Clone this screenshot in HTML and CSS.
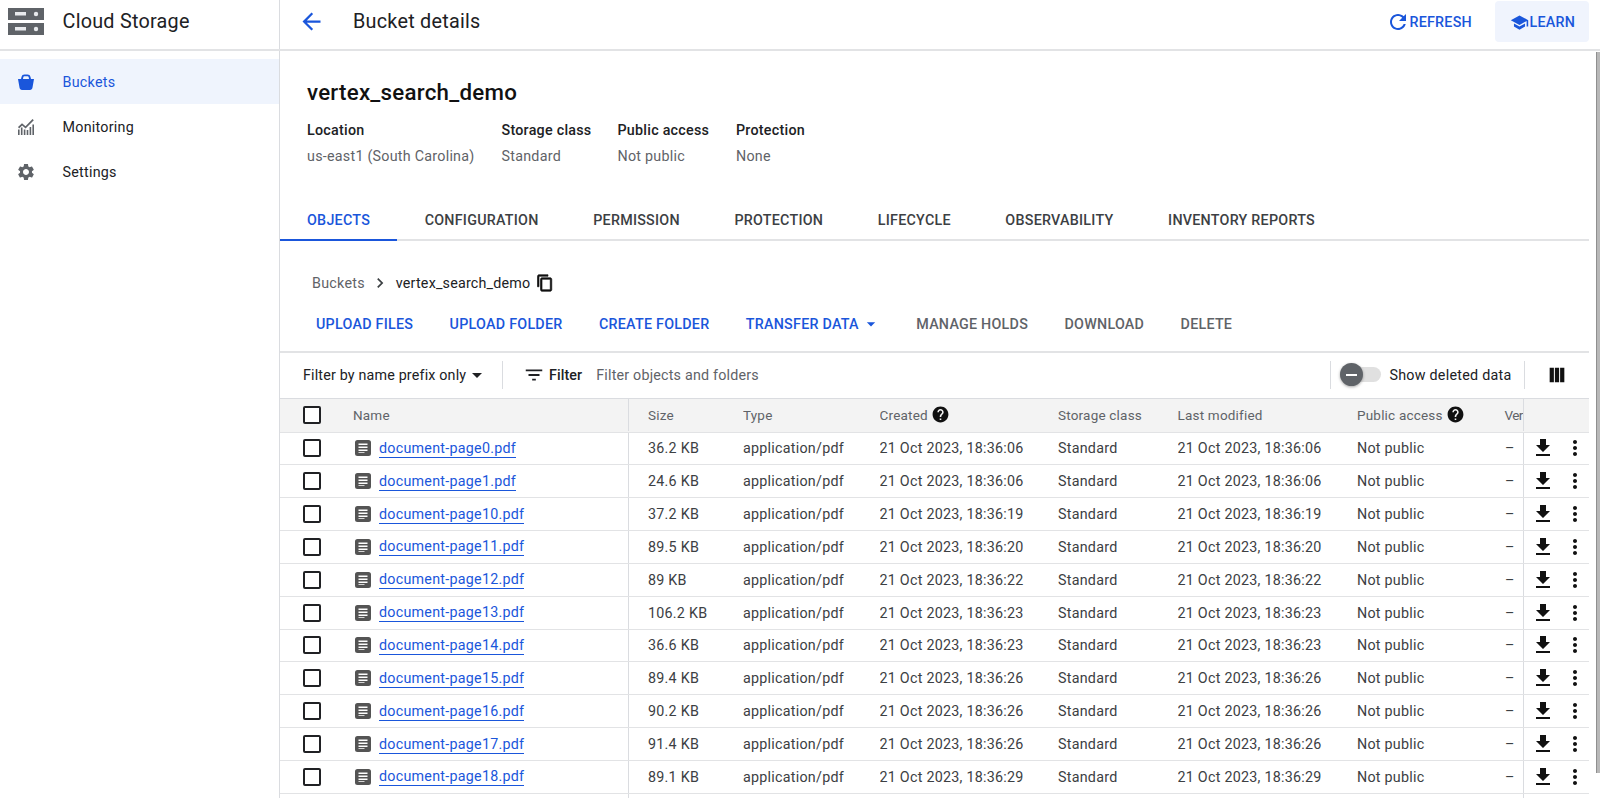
FILE: index.html
```html
<!DOCTYPE html>
<html lang="en">
<head>
<meta charset="utf-8">
<title>Bucket details - Cloud Storage</title>
<link rel="stylesheet" href="styles.css">
</head>
<body>
<svg class="defs" aria-hidden="true">
  <symbol id="i-dl" viewBox="0 0 24 24"><path d="M19 9h-4V3H9v6H5l7 7 7-7zM5 18v2h14v-2H5z"/></symbol>
  <symbol id="i-more" viewBox="0 0 24 24"><path d="M12 8c1.1 0 2-.9 2-2s-.9-2-2-2-2 .9-2 2 .9 2 2 2zm0 2c-1.1 0-2 .9-2 2s.9 2 2 2 2-.9 2-2-.9-2-2-2zm0 6c-1.1 0-2 .9-2 2s.9 2 2 2 2-.9 2-2-.9-2-2-2z"/></symbol>
  <symbol id="i-help" viewBox="0 0 24 24"><path d="M12 2C6.48 2 2 6.48 2 12s4.48 10 10 10 10-4.48 10-10S17.52 2 12 2zm1 17h-2v-2h2v2zm2.07-7.75l-.9.92C13.45 12.9 13 13.5 13 15h-2v-.5c0-1.1.45-2.1 1.17-2.83l1.24-1.26c.37-.36.59-.86.59-1.41 0-1.1-.9-2-2-2s-2 .9-2 2H8c0-2.21 1.79-4 4-4s4 1.79 4 4c0 .88-.36 1.68-.93 2.25z"/></symbol>
  <symbol id="i-doc" viewBox="0 0 16 16"><path fill-rule="evenodd" d="M2.5 0h11A2.5 2.5 0 0 1 16 2.500v11a2.500 2.500 0 0 1-2.500 2.500h-11A2.500 2.500 0 0 1 0 13.500v-11A2.500 2.500 0 0 1 2.500 0zM3.500 3.500v1.500h9V3.500zM3.500 6.500V8h9V6.500zM3.500 9.500V11h9V9.500zM3.500 12v.800h6V12z"/></symbol>
</svg>
<div class="app">
  <header class="topbar">
    <div class="brand">
      <svg class="logo" viewBox="0 0 36 27"><path fill="#5f6368" d="M0 0h36v12H0zM0 15h36v12H0z"/><path fill="#e8eaed" d="M7 4h11v3.500H7zM7 19h11v3.500H7z"/><circle cx="28" cy="6" r="2.200" fill="#e8eaed"/><circle cx="28" cy="21" r="2.200" fill="#e8eaed"/></svg>
      <span class="brand-name">Cloud Storage</span>
    </div>
    <div class="pagehead">
      <svg class="back" viewBox="0 0 24 24"><path d="M20 11H7.830l5.590-5.590L12 4l-8 8 8 8 1.410-1.410L7.830 13H20v-2z"/></svg>
      <h1 class="page-title">Bucket details</h1>
      <a class="head-btn refresh"><svg viewBox="0 0 24 24"><path d="M17.650 6.350C16.200 4.900 14.210 4 12 4c-4.420 0-7.990 3.580-7.990 8s3.570 8 7.990 8c3.730 0 6.840-2.550 7.730-6h-2.080c-.82 2.330-3.040 4-5.650 4-3.310 0-6-2.690-6-6s2.690-6 6-6c1.660 0 3.140.69 4.220 1.780L13 11h7V4l-2.350 2.350z"/></svg>REFRESH</a>
      <a class="head-btn learn"><svg viewBox="0 0 24 24"><path d="M5 13.180v4L12 21l7-3.820v-4L12 17l-7-3.820zM12 3L1 9l11 6 9-4.910V17h2V9L12 3z"/></svg>LEARN</a>
    </div>
  </header>
  <div class="workspace">
    <nav class="sidenav">
      <a class="nav-item active"><svg viewBox="0 0 16 16"><path fill-rule="evenodd" d="M3 5l.5-2C3.800 1.300 5 .5 6.500.5h3C11 .5 12.200 1.300 12.500 3l.5 2h3l-1.500 8.500C14.300 15 13.300 16 12 16H4c-1.300 0-2.300-1-2.500-2.500L0 5zM5 5h6l-.3-1.800c-.1-.6-.5-.9-1.100-.9H6.400c-.6 0-1 .3-1.100.9z"/></svg>Buckets</a>
      <a class="nav-item"><svg viewBox="0 0 16 16"><path d="M0 16v-5.500h1.600V16zM2.900 16V8.500h1.600V16zM5.800 16v-5.500h1.600V16zM8.700 16v-5h1.600v5zM11.600 16V8h1.600v8zM14.400 16V5.500H16V16z"/><path d="M0 8l4-3.700 3.500 3L14.500 0l1.300 1.200-8.200 8.300-3.500-3L1.100 9.400z"/></svg>Monitoring</a>
      <a class="nav-item"><svg viewBox="0 0 24 24"><path d="M19.140 12.940c.04-.3.06-.61.06-.94 0-.32-.02-.64-.07-.94l2.030-1.580c.18-.14.23-.41.12-.61l-1.920-3.320c-.12-.22-.37-.29-.59-.22l-2.390.96c-.5-.38-1.030-.7-1.620-.94l-.36-2.540c-.04-.24-.24-.41-.48-.41h-3.840c-.24 0-.43.17-.47.41l-.36 2.540c-.59.24-1.130.57-1.620.94l-2.390-.96c-.22-.08-.47 0-.59.22L2.740 8.870c-.12.21-.08.47.12.61l2.030 1.580c-.05.3-.09.63-.09.94s.02.64.07.94l-2.030 1.580c-.18.14-.23.41-.12.61l1.920 3.320c.12.22.37.29.59.22l2.390-.96c.5.38 1.030.7 1.620.94l.36 2.540c.05.24.24.41.48.41h3.840c.24 0 .44-.17.47-.41l.36-2.540c.59-.24 1.130-.56 1.620-.94l2.390.96c.22.08.47 0 .59-.22l1.920-3.320c.12-.22.07-.47-.12-.61l-2.010-1.580zM12 15.600c-1.980 0-3.600-1.620-3.600-3.600s1.620-3.600 3.600-3.600 3.600 1.620 3.600 3.600-1.620 3.600-3.600 3.600z"/></svg>Settings</a>
    </nav>
    <main class="content">
      <section class="summary">
        <h2 class="bucket-name">vertex_search_demo</h2>
        <dl class="facts">
          <div class="fact fact-loc"><dt>Location</dt><dd>us-east1 (South Carolina)</dd></div>
          <div class="fact fact-class"><dt>Storage class</dt><dd>Standard</dd></div>
          <div class="fact fact-access"><dt>Public access</dt><dd>Not public</dd></div>
          <div class="fact"><dt>Protection</dt><dd>None</dd></div>
        </dl>
      </section>
      <div class="tabs">
        <a class="tab active">OBJECTS</a>
        <a class="tab">CONFIGURATION</a>
        <a class="tab">PERMISSION</a>
        <a class="tab">PROTECTION</a>
        <a class="tab">LIFECYCLE</a>
        <a class="tab">OBSERVABILITY</a>
        <a class="tab">INVENTORY REPORTS</a>
      </div>
      <div class="crumbs">
        <span class="crumb-root">Buckets</span>
        <svg class="crumb-sep" viewBox="0 0 24 24"><path d="M10 6L8.590 7.410 13.170 12l-4.580 4.590L10 18l6-6z"/></svg>
        <span class="crumb-cur">vertex_search_demo</span>
        <svg class="crumb-copy" viewBox="0 0 24 24"><path d="M16 1H4c-1.100 0-2 .9-2 2v14h2V3h12V1zm3 4H8c-1.100 0-2 .9-2 2v14c0 1.100.9 2 2 2h11c1.100 0 2-.9 2-2V7c0-1.100-.9-2-2-2zm0 16H8V7h11v14z"/></svg>
      </div>
      <div class="actions">
        <a class="act act-on">UPLOAD FILES</a>
        <a class="act act-on">UPLOAD FOLDER</a>
        <a class="act act-on">CREATE FOLDER</a>
        <a class="act act-on act-transfer">TRANSFER DATA<svg class="caret" viewBox="0 0 24 24"><path d="M7 10l5 5 5-5z"/></svg></a>
        <a class="act">MANAGE HOLDS</a>
        <a class="act">DOWNLOAD</a>
        <a class="act">DELETE</a>
      </div>
      <div class="filterbar">
        <div class="prefix">Filter by name prefix only<svg viewBox="0 0 24 24"><path d="M7 10l5 5 5-5z"/></svg></div>
        <div class="filter-label"><svg viewBox="0 0 24 24"><path d="M10 18h4v-2h-4v2zM3 6v2h18V6H3zm3 7h12v-2H6v2z"/></svg>Filter</div>
        <div class="filter-input">Filter objects and folders</div>
        <div class="deleted">
          <span class="toggle"><span class="knob"></span></span>
          Show deleted data
        </div>
        <div class="columns-btn"><svg viewBox="0 0 24 24"><path d="M4 4h4.600v16H4zM9.700 4h4.600v16H9.700zM15.400 4H20v16h-4.600z"/></svg></div>
      </div>
      <div class="table">
        <div class="row head">
          <div class="c-check"><span class="box"></span></div>
          <div class="c-name">Name</div>
          <div class="c-size">Size</div>
          <div>Type</div>
          <div class="with-help">Created<svg class="help"><use href="#i-help"/></svg></div>
          <div>Storage class</div>
          <div>Last modified</div>
          <div class="with-help">Public access<svg class="help"><use href="#i-help"/></svg></div>
          <div class="c-ver">Ver</div>
          <div class="c-act"></div>
        </div>
        <div class="row"><div class="c-check"><span class="box"></span></div><div class="c-name"><svg class="doc"><use href="#i-doc"/></svg><a class="file">document-page0.pdf</a></div><div class="c-size">36.2 KB</div><div>application/pdf</div><div>21 Oct 2023, 18:36:06</div><div>Standard</div><div>21 Oct 2023, 18:36:06</div><div>Not public</div><div class="c-ver">–</div><div class="c-act"><svg class="dl"><use href="#i-dl"/></svg><svg class="more"><use href="#i-more"/></svg></div></div>
        <div class="row"><div class="c-check"><span class="box"></span></div><div class="c-name"><svg class="doc"><use href="#i-doc"/></svg><a class="file">document-page1.pdf</a></div><div class="c-size">24.6 KB</div><div>application/pdf</div><div>21 Oct 2023, 18:36:06</div><div>Standard</div><div>21 Oct 2023, 18:36:06</div><div>Not public</div><div class="c-ver">–</div><div class="c-act"><svg class="dl"><use href="#i-dl"/></svg><svg class="more"><use href="#i-more"/></svg></div></div>
        <div class="row"><div class="c-check"><span class="box"></span></div><div class="c-name"><svg class="doc"><use href="#i-doc"/></svg><a class="file">document-page10.pdf</a></div><div class="c-size">37.2 KB</div><div>application/pdf</div><div>21 Oct 2023, 18:36:19</div><div>Standard</div><div>21 Oct 2023, 18:36:19</div><div>Not public</div><div class="c-ver">–</div><div class="c-act"><svg class="dl"><use href="#i-dl"/></svg><svg class="more"><use href="#i-more"/></svg></div></div>
        <div class="row"><div class="c-check"><span class="box"></span></div><div class="c-name"><svg class="doc"><use href="#i-doc"/></svg><a class="file">document-page11.pdf</a></div><div class="c-size">89.5 KB</div><div>application/pdf</div><div>21 Oct 2023, 18:36:20</div><div>Standard</div><div>21 Oct 2023, 18:36:20</div><div>Not public</div><div class="c-ver">–</div><div class="c-act"><svg class="dl"><use href="#i-dl"/></svg><svg class="more"><use href="#i-more"/></svg></div></div>
        <div class="row"><div class="c-check"><span class="box"></span></div><div class="c-name"><svg class="doc"><use href="#i-doc"/></svg><a class="file">document-page12.pdf</a></div><div class="c-size">89 KB</div><div>application/pdf</div><div>21 Oct 2023, 18:36:22</div><div>Standard</div><div>21 Oct 2023, 18:36:22</div><div>Not public</div><div class="c-ver">–</div><div class="c-act"><svg class="dl"><use href="#i-dl"/></svg><svg class="more"><use href="#i-more"/></svg></div></div>
        <div class="row"><div class="c-check"><span class="box"></span></div><div class="c-name"><svg class="doc"><use href="#i-doc"/></svg><a class="file">document-page13.pdf</a></div><div class="c-size">106.2 KB</div><div>application/pdf</div><div>21 Oct 2023, 18:36:23</div><div>Standard</div><div>21 Oct 2023, 18:36:23</div><div>Not public</div><div class="c-ver">–</div><div class="c-act"><svg class="dl"><use href="#i-dl"/></svg><svg class="more"><use href="#i-more"/></svg></div></div>
        <div class="row"><div class="c-check"><span class="box"></span></div><div class="c-name"><svg class="doc"><use href="#i-doc"/></svg><a class="file">document-page14.pdf</a></div><div class="c-size">36.6 KB</div><div>application/pdf</div><div>21 Oct 2023, 18:36:23</div><div>Standard</div><div>21 Oct 2023, 18:36:23</div><div>Not public</div><div class="c-ver">–</div><div class="c-act"><svg class="dl"><use href="#i-dl"/></svg><svg class="more"><use href="#i-more"/></svg></div></div>
        <div class="row"><div class="c-check"><span class="box"></span></div><div class="c-name"><svg class="doc"><use href="#i-doc"/></svg><a class="file">document-page15.pdf</a></div><div class="c-size">89.4 KB</div><div>application/pdf</div><div>21 Oct 2023, 18:36:26</div><div>Standard</div><div>21 Oct 2023, 18:36:26</div><div>Not public</div><div class="c-ver">–</div><div class="c-act"><svg class="dl"><use href="#i-dl"/></svg><svg class="more"><use href="#i-more"/></svg></div></div>
        <div class="row"><div class="c-check"><span class="box"></span></div><div class="c-name"><svg class="doc"><use href="#i-doc"/></svg><a class="file">document-page16.pdf</a></div><div class="c-size">90.2 KB</div><div>application/pdf</div><div>21 Oct 2023, 18:36:26</div><div>Standard</div><div>21 Oct 2023, 18:36:26</div><div>Not public</div><div class="c-ver">–</div><div class="c-act"><svg class="dl"><use href="#i-dl"/></svg><svg class="more"><use href="#i-more"/></svg></div></div>
        <div class="row"><div class="c-check"><span class="box"></span></div><div class="c-name"><svg class="doc"><use href="#i-doc"/></svg><a class="file">document-page17.pdf</a></div><div class="c-size">91.4 KB</div><div>application/pdf</div><div>21 Oct 2023, 18:36:26</div><div>Standard</div><div>21 Oct 2023, 18:36:26</div><div>Not public</div><div class="c-ver">–</div><div class="c-act"><svg class="dl"><use href="#i-dl"/></svg><svg class="more"><use href="#i-more"/></svg></div></div>
        <div class="row"><div class="c-check"><span class="box"></span></div><div class="c-name"><svg class="doc"><use href="#i-doc"/></svg><a class="file">document-page18.pdf</a></div><div class="c-size">89.1 KB</div><div>application/pdf</div><div>21 Oct 2023, 18:36:29</div><div>Standard</div><div>21 Oct 2023, 18:36:29</div><div>Not public</div><div class="c-ver">–</div><div class="c-act"><svg class="dl"><use href="#i-dl"/></svg><svg class="more"><use href="#i-more"/></svg></div></div>
        <div class="row"><div class="c-check"></div><div class="c-name"></div><div class="c-size"></div><div></div><div></div><div></div><div></div><div></div><div class="c-ver"></div><div class="c-act"></div></div>
      </div>
    </main>
  </div>
  <div class="scroll-thumb"></div>
</div>
</body>
</html>
```
FILE: styles.css
```css
* { box-sizing: border-box; }
html, body { margin: 0; height: 100%; background: #fff; }
body {
  font-family: Roboto, "Liberation Sans", sans-serif;
  font-size: 14.3px;
  letter-spacing: .25px;
  color: #3c4043;
  overflow: hidden;
}
.defs { width: 0; height: 0; position: absolute; }
svg { display: block; fill: currentColor; flex: none; }
a { color: inherit; text-decoration: none; }
h1, h2, dl, dd { margin: 0; font-weight: 400; }

.app { position: relative; height: 798px; overflow: hidden; display: flex; flex-direction: column; }

.topbar { display: flex; height: 51px; border-bottom: 2px solid #e2e3e5; flex: none; }
.brand { width: 280px; border-right: 1px solid #dadce0; display: flex; align-items: center; padding-left: 8px; }
.logo { width: 36px; height: 27px; margin-top: -6px; }
.brand-name { margin-left: 18.500px; font-size: 19.800px; color: #202124; margin-top: -7px; }
.pagehead { flex: 1; display: flex; align-items: center; padding-left: 18px; padding-right: 11px; }
.back { width: 27px; height: 27px; color: #1a56db; margin-top: -6px; }
.page-title { font-size: 19.800px; color: #202124; margin-left: 28px; margin-top: -7px; }
.head-btn { display: flex; align-items: center; color: #1a56db; font-weight: 500; font-size: 14.300px; }
.refresh { margin-left: auto; margin-right: 23px; margin-top: -6px; }
.refresh svg { width: 24px; height: 24px; margin-right: -1px; }
.learn { background: #f0f4fd; border-radius: 4px; height: 41px; width: 94px; padding: 1px 0 0 15px; margin-top: -6px; }
.learn svg { width: 19px; height: 19px; margin: 0 1px 0 -.5px; }

.workspace { flex: 1; display: flex; min-height: 0; }
.sidenav { width: 280px; flex: none; border-right: 1px solid #dadce0; padding-top: 8px; }
.nav-item { display: flex; align-items: center; height: 45px; padding-left: 18px; color: #202124; }
.nav-item svg { width: 16px; height: 16px; margin-right: 28.500px; color: #5f6368; }
.nav-item:nth-child(3) svg { width: 20px; height: 20px; margin-left: -2px; margin-right: 26.500px; }
.nav-item.active { background: #eff4fd; color: #1a56db; }
.nav-item.active svg { color: #1a56db; }

.content { flex: 1; min-width: 0; padding-right: 11px; }

.summary { padding: 27px 0 0 27px; height: 150px; }
.bucket-name { font-size: 22.300px; font-weight: 500; color: #111; line-height: 28px; }
.facts { display: flex; margin-top: 14px; }
.fact dt { font-weight: 500; color: #202124; line-height: 20px; }
.fact dd { margin-top: 6px; line-height: 20px; color: #5f6368; }
.fact-loc { width: 194.500px; }
.fact-class { width: 116px; }
.fact-access { width: 118.500px; }

.tabs { display: flex; height: 40px; border-bottom: 2px solid #e2e3e5; align-items: stretch; }
.tab { font-weight: 500; padding: 0 27.300px; line-height: 38px; height: 40px; color: #3c4043; white-space: nowrap; }
.tab:first-child { padding-left: 27px; }
.tab.active { color: #1a56db; border-bottom: 2px solid #1a56db; }

.crumbs { display: flex; align-items: center; height: 20px; margin-top: 32px; padding-left: 32px; }
.crumb-root { color: #5f6368; }
.crumb-sep { width: 20px; height: 20px; margin: 0 6px 0 5px; color: #3c4043; }
.crumb-cur { color: #202124; letter-spacing: .2px; }
.crumb-copy { width: 18px; height: 18px; margin-left: 6px; color: #111; stroke: currentColor; stroke-width: .9; }

.actions { display: flex; align-items: center; gap: 36.400px; height: 57px; margin-top: 3px; padding: 1px 0 0 36px; border-bottom: 2px solid #e2e3e5; font-weight: 500; color: #5f6368; }
.act { white-space: nowrap; display: flex; align-items: center; }
.act-on { color: #1a56db; }
.act-transfer { margin-right: 4.500px; }
.caret { width: 20px; height: 20px; margin-left: -3.500px; transform: translateX(6px); }

.filterbar { display: flex; align-items: center; height: 45px; padding: 0 0 2px 23px; }
.prefix { display: flex; align-items: center; color: #202124; height: 28px; border-right: 1px solid #dadce0; padding-right: 12.700px; letter-spacing: .17px; }
.prefix svg { width: 24px; height: 24px; margin-left: -1px; }
.filter-label { display: flex; align-items: center; font-weight: 500; color: #202124; margin-left: 20px; letter-spacing: .1px; }
.filter-label svg { width: 22px; height: 22px; margin-right: 4px; }
.filter-input { margin-left: 14px; color: #5f6368; letter-spacing: .2px; }
.deleted { margin-left: auto; display: flex; align-items: center; height: 28px; border-left: 1px solid #dadce0; border-right: 1px solid #dadce0; padding-left: 9px; color: #202124; width: 195px; white-space: nowrap; }
.toggle { position: relative; width: 41px; height: 15px; background: #e0e0e0; border-radius: 8px; margin-right: 9px; flex: none; }
.knob { position: absolute; left: 0; top: -4px; width: 23px; height: 23px; border-radius: 50%; background: #5f6368; box-shadow: 0 1px 3px rgba(0,0,0,.35); }
.knob::after { content: ""; position: absolute; left: 6px; right: 6px; top: 10.500px; height: 2px; background: #fff; }
.columns-btn { width: 64.500px; display: flex; justify-content: center; color: #111; }
.columns-btn svg { width: 22px; height: 22px; }

.table { border-top: 1px solid #dadce0; }
.row {
  display: grid;
  grid-template-columns: 73px 276px 114px 136.500px 178.500px 119.500px 179.500px 148px 18px 66px;
  height: 32.850px;
  align-items: stretch;
  border-bottom: 1.500px solid #e2e3e5;
}
.row > div { display: flex; align-items: center; white-space: nowrap; overflow: hidden; }
.row.head { height: 33.500px; background: #f3f3f3; color: #5f6368; font-size: 13.500px; letter-spacing: .2px; padding-bottom: 1px; }
.c-check { padding-left: 23px; }
.box { width: 18px; height: 18px; border: 2.500px solid #202124; border-radius: 2px; display: block; background: #fff; }
.c-name { border-right: 1.500px solid #dadce0; }
.c-size { padding-left: 19px; }
.row > .c-ver { overflow: visible; }
.head .c-ver { letter-spacing: -.6px; margin-left: -.5px; }
.c-act { border-left: 1.500px solid #dadce0; padding-left: 6.500px; gap: 8px; }
.doc { width: 16px; height: 16px; margin: 0 8px 0 2px; color: #545454; }
.file { color: #1a56db; border-bottom: 1px solid #1a56db; line-height: 17px; margin-top: 1px; }
.with-help { gap: 3.500px; }
.help { width: 19px; height: 19px; color: #111; }
.dl { width: 24px; height: 24px; color: #111; }
.more { width: 24px; height: 24px; color: #111; }

.scroll-thumb { position: absolute; right: 0; top: 52px; width: 4px; height: 721px; background: #b8b8b8; border-left: 1px solid #8f8f8f; }
```
